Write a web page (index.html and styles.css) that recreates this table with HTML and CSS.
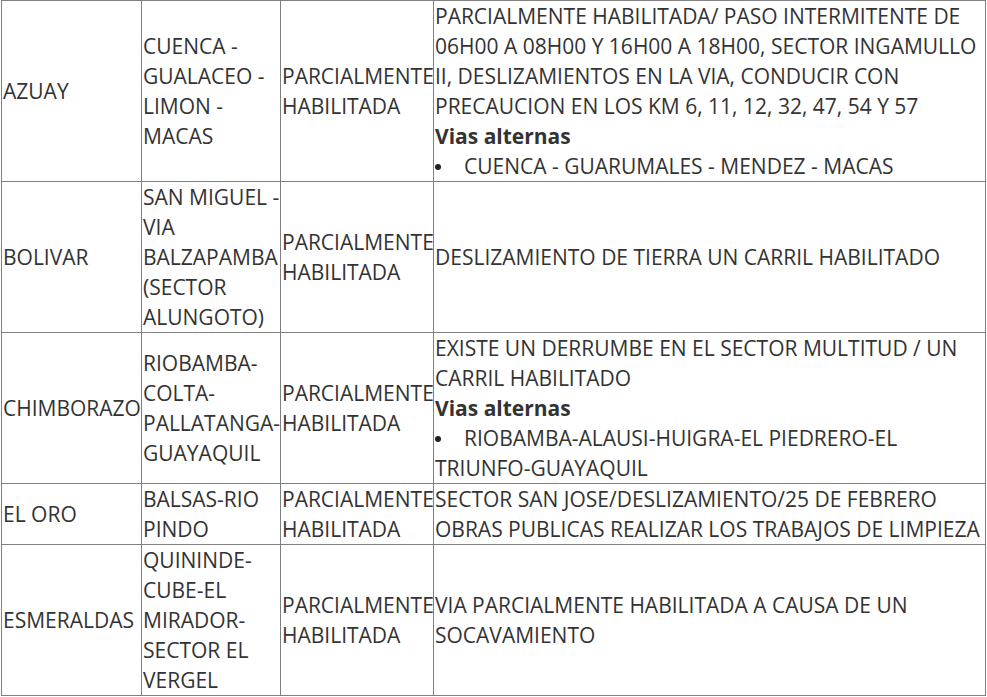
FILE: index.html
```html
<!DOCTYPE html>
<html lang="es">
<head>
<meta charset="utf-8">
<link rel="stylesheet" href="styles.css">
</head>
<body>
<table class="vias">
  <colgroup>
    <col class="c1"><col class="c2"><col class="c3"><col class="c4">
  </colgroup>
  <tbody>
    <tr>
      <td>AZUAY</td>
      <td>CUENCA - GUALACEO - LIMON - MACAS</td>
      <td>PARCIALMENTE HABILITADA</td>
      <td>PARCIALMENTE HABILITADA/ PASO INTERMITENTE DE 06H00 A 08H00 Y 16H00 A 18H00, SECTOR INGAMULLO II, DESLIZAMIENTOS EN LA VIA, CONDUCIR CON PRECAUCION EN LOS KM 6, 11, 12, 32, 47, 54 Y 57
        <div class="alt">Vias alternas</div>
        <ul class="list"><li><span class="dot"></span>CUENCA - GUARUMALES - MENDEZ - MACAS</li></ul>
      </td>
    </tr>
    <tr>
      <td>BOLIVAR</td>
      <td>SAN MIGUEL - VIA BALZAPAMBA (SECTOR ALUNGOTO)</td>
      <td>PARCIALMENTE HABILITADA</td>
      <td>DESLIZAMIENTO DE TIERRA UN CARRIL HABILITADO</td>
    </tr>
    <tr>
      <td>CHIMBORAZO</td>
      <td>RIOBAMBA-COLTA-PALLATANGA-GUAYAQUIL</td>
      <td>PARCIALMENTE HABILITADA</td>
      <td>EXISTE UN DERRUMBE EN EL SECTOR MULTITUD / UN CARRIL HABILITADO
        <div class="alt">Vias alternas</div>
        <ul class="list"><li><span class="dot"></span>RIOBAMBA-ALAUSI-HUIGRA-EL PIEDRERO-EL TRIUNFO-GUAYAQUIL</li></ul>
      </td>
    </tr>
    <tr>
      <td>EL ORO</td>
      <td>BALSAS-RIO PINDO</td>
      <td>PARCIALMENTE HABILITADA</td>
      <td>SECTOR SAN JOSE/DESLIZAMIENTO/25 DE FEBRERO OBRAS PUBLICAS REALIZAR LOS TRABAJOS DE LIMPIEZA</td>
    </tr>
    <tr>
      <td>ESMERALDAS</td>
      <td>QUININDE-CUBE-EL MIRADOR-SECTOR EL VERGEL</td>
      <td>PARCIALMENTE HABILITADA</td>
      <td>VIA PARCIALMENTE HABILITADA A CAUSA DE UN SOCAVAMIENTO</td>
    </tr>
  </tbody>
</table>
</body>
</html>
```
FILE: styles.css
```css
html, body {
  margin: 0;
  padding: 0;
  background: #fff;
}
body {
  padding-left: 1px;
  font-family: "Open Sans", "Noto Sans", sans-serif;
  font-size: 21px;
  line-height: 30px;
  color: #333;
}
.vias {
  border-collapse: collapse;
  table-layout: fixed;
  width: 984px;
  border: 1px solid #333;
}
.c1 { width: 140px; }
.c2 { width: 139px; }
.c3 { width: 153px; }
.c4 { width: 552px; }
.vias td {
  border: 1px solid #808080;
  padding: 0 0 0 1px;
  vertical-align: middle;
}
.alt {
  font-weight: 700;
}
.list {
  list-style: none;
  margin: 0;
  padding: 0;
}
.dot {
  display: inline-block;
  width: 29px;
  height: 10px;
  position: relative;
}
.dot::before {
  content: "";
  position: absolute;
  left: 0;
  top: 0;
  width: 6px;
  height: 6px;
  border-radius: 50%;
  background: #222;
}
```
